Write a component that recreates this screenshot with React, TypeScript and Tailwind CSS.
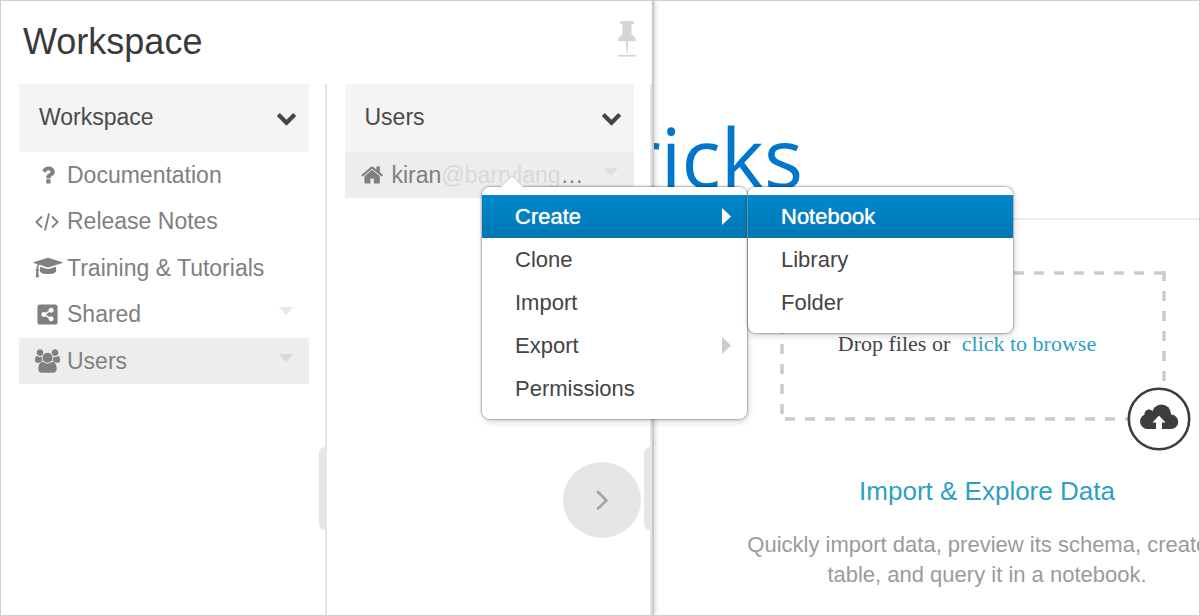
import type { ReactNode } from "react";
import { FaShareAltSquare } from "react-icons/fa";

const QUESTION =
  "M1088 1256v240q0 16-12 28t-28 12h-240q-16 0-28-12t-12-28v-240q0-16 12-28t28-12h240q16 0 28 12t12 28zm316-600q0 54-15.5 101t-35 76.5-55 59.5-57.5 43.5-61 35.5q-41 23-68.5 65t-27.5 67q0 17-12 32.5t-28 15.5h-240q-15 0-25.5-18.5t-10.5-37.5v-45q0-83 65-156.5t143-108.5q59-27 84-56t25-76q0-42-46.5-74t-107.5-32q-65 0-108 29-35 25-107 115-13 16-31 16-12 0-25-8l-164-125q-13-10-15.5-25t5.5-28q160-266 464-266 80 0 161 31t146 83 106 127.5 41 158.5z";
const CAP =
  "M1774 836l18 316q4 69-82 128t-235 93.5-323 34.5-323-34.5-235-93.5-82-128l18-316 574 181q22 7 48 7t48-7zm530-324q0 23-22 31l-1120 352q-4 1-10 1t-10-1l-652-206q-43 34-71 111.5t-34 178.5q63 36 63 109 0 69-58 107l58 433q2 14-8 25-9 11-24 11h-192q-15 0-24-11-10-11-8-25l58-433q-58-38-58-107 0-73 65-111 11-207 98-330l-333-104q-22-8-22-31t22-31l1120-352q4-1 10-1t10 1l1120 352q22 8 22 31z";
const GROUP =
  "M593 896q-162 5-265 128h-134q-82 0-138-40.5t-56-118.5q0-353 124-353 6 0 43.5 21t97.5 42.5 119 21.5q67 0 133-23-5 37-5 66 0 139 81 256zm1071 637q0 120-73 189.5t-194 69.5h-874q-121 0-194-69.5t-73-189.5q0-53 3.5-103.5t14-109 26.5-108.5 43-97.5 62-81 85.5-53.5 111.5-20q10 0 43 21.5t73 48 107 48 135 21.5 135-21.5 107-48 73-48 43-21.5q61 0 111.5 20t85.5 53.5 62 81 43 97.5 26.5 108.5 14 109 3.5 103.5zm-1024-1277q0 106-75 181t-181 75-181-75-75-181 75-181 181-75 181 75 75 181zm704 384q0 159-112.5 271.5t-271.5 112.5-271.5-112.5-112.5-271.5 112.5-271.5 271.5-112.5 271.5 112.5 112.5 271.5zm576 225q0 78-56 118.5t-138 40.5h-134q-103-123-265-128 81-117 81-256 0-29-5-66 66 23 133 23 59 0 119-21.5t97.5-42.5 43.5-21q124 0 124 353zm-128-609q0 106-75 181t-181 75-181-75-75-181 75-181 181-75 181 75 75 181z";
const HOME =
  "M1408 992v480q0 26-19 45t-45 19h-384v-384h-256v384h-384q-26 0-45-19t-19-45v-480q0-1 .5-3t.5-3l575-474 575 474q1 2 1 6zm223-69l-62 74q-8 9-21 11h-3q-13 0-21-7l-692-577-692 577q-12 8-24 7-13-2-21-11l-62-74q-8-10-7-23.5t11-21.5l719-599q32-26 76-26t76 26l244 204v-195q0-14 9-23t23-9h192q14 0 23 9t9 23v408l219 182q10 8 11 21.5t-7 23.5z";
const CHEVRON =
  "M1683 808l-742 741q-19 19-45 19t-45-19l-742-741q-19-19-19-45.5t19-45.5l166-165q19-19 45-19t45 19l531 531 531-531q19-19 45-19t45 19l166 165q19 19 19 45.500t-19 45.500z";

function Glyph({ d, box, className }: { d: string; box: string; className: string }) {
  return (
    <svg viewBox={box} className={className} fill="currentColor" aria-hidden="true">
      <path d={d} />
    </svg>
  );
}

function Caret({ className }: { className: string }) {
  return (
    <svg viewBox="0 0 14 8" className={`mb-1.5 h-2 w-3.5 ${className}`} fill="currentColor" aria-hidden="true">
      <path d="M0 0h14L7 8z" />
    </svg>
  );
}

function ColumnHeader({ title }: { title: string }) {
  return (
    <button className="flex h-[68px] w-full items-center justify-between bg-[#f4f4f4] pr-3 pb-0.5 pl-5 text-left text-[23px] text-[#4a4a4a]">
      {title}
      <Glyph d={CHEVRON} box="0 0 1792 1792" className="size-[21px] text-[#444]" />
    </button>
  );
}

function Row({
  icon,
  children,
  caret,
  active,
}: {
  icon: ReactNode;
  children: ReactNode;
  caret?: string;
  active?: boolean;
}) {
  return (
    <li className={active ? "bg-[#ededed]" : ""}>
      <a href="#" className="flex h-full items-center pr-4 text-[23px] text-[#808080]">
        {icon}
        <span className="flex-1 whitespace-nowrap">{children}</span>
        {caret && <Caret className={caret} />}
      </a>
    </li>
  );
}

function Column({ title, children }: { title: string; children: ReactNode }) {
  return (
    <section className="relative flex-1 border-r-2 border-[#e6e6e6] pr-4 pl-[18px]">
      <ColumnHeader title={title} />
      {children}
      <div className="absolute top-[363px] right-0 h-[83px] w-1.5 rounded-l-md bg-[#e5e6e8]" />
    </section>
  );
}

function MenuItem({ label, arrow, active }: { label: string; arrow?: boolean; active?: boolean }) {
  return (
    <li>
      <button
        role="menuitem"
        className={
          active
            ? "flex h-[43px] w-full items-center justify-between bg-linear-to-b from-[#0088cc] to-[#0077b3] pr-4 pl-[33px] text-white [text-shadow:0_0_1px_#fff]"
            : "flex h-[43px] w-full items-center justify-between pr-4 pl-[33px] text-[#444]"
        }
      >
        {label}
        {arrow && (
          <svg
            viewBox="0 0 9 17"
            className={active ? "h-[17px] w-[9px] text-white" : "h-[17px] w-[9px] text-[#ccc]"}
            fill="currentColor"
            aria-hidden="true"
          >
            <path d="M0 0l9 8.500L0 17z" />
          </svg>
        )}
      </button>
    </li>
  );
}

const menuClass =
  "absolute w-[267px] rounded-[9px] border border-black/15 bg-white bg-clip-padding pt-2 pb-[9px] text-[22px] shadow-[0_0_1px_1px_rgba(0,0,0,0.08),1px_3px_6px_rgba(0,0,0,0.12)]";

export default function App() {
  return (
    <div className="relative flex min-h-screen overflow-hidden border border-[#cfcfcf] bg-white font-['Liberation_Sans',Arial,sans-serif]">
      <aside className="z-10 flex w-[653px] shrink-0 flex-col border-r-2 border-[#c9c9c9] bg-white shadow-[2px_0_4px_rgba(0,0,0,0.14)]">
        <header className="flex h-[83px] items-start justify-between pt-3.5 pr-4 pl-[22px]">
          <h1 className="text-[36px] leading-[54px] text-[#3a3a3a]">Workspace</h1>
          <button aria-label="Pin panel" className="pt-1.5">
            <svg viewBox="0 0 18 36" className="h-9 w-[18px]" fill="#d5d5d5" aria-hidden="true">
              <path d="M3.500 0h11q1.500 0 1.500 1.600T14.500 3.200l-1 .3v10q4.500 2 4.500 6.800H0q0-4.800 4.500-6.800v-10l-1-.3Q2 3.200 2 1.600T3.500 0z" />
              <path d="M8 20h2.200l-.5 12h-1.200z" />
              <path d="M0 33.800h18v1.800H0z" />
            </svg>
          </button>
        </header>
        <div className="flex flex-1">
          <Column title="Workspace">
            <ul className="grid h-[232px] grid-rows-5">
              <Row icon={<Glyph d={QUESTION} box="0 0 1792 1792" className="mr-[7px] ml-[17px] size-6" />}>
                Documentation
              </Row>
              <Row
                icon={
                  <svg viewBox="0 0 24 18" className="mr-2 ml-4 h-[18px] w-6" fill="none" stroke="currentColor" strokeWidth="1.900" aria-hidden="true">
                    <path d="M7 3.500L1.400 9 7 14.500M17 3.500L22.600 9 17 14.500M14 .5l-4 17" />
                  </svg>
                }
              >
                Release Notes
              </Row>
              <Row icon={<Glyph d={CAP} box="0 0 2304 1792" className="mr-1 ml-3.5 h-[23px] w-[30px]" />}>
                Training &amp; Tutorials
              </Row>
              <Row icon={<FaShareAltSquare className="mr-[7px] ml-4 size-[23px] w-[25px]" />} caret="text-[#e8e8e8]">
                Shared
              </Row>
              <Row
                icon={<Glyph d={GROUP} box="0 0 1920 1792" className="mr-[7px] ml-4 h-6 w-[25px]" />}
                caret="text-[#dadada]"
                active
              >
                Users
              </Row>
            </ul>
          </Column>
          <Column title="Users">
            <ul className="grid h-[46px]">
              <Row
                icon={<Glyph d={HOME} box="0 0 1792 1792" className="mr-[7px] ml-4 size-6" />}
                caret="text-[#dedede]"
                active
              >
                kiran<span className="text-[#d9d9d9]">@barrylang</span>…
              </Row>
            </ul>
            <button
              aria-label="Next"
              className="absolute top-[378px] right-[9px] flex h-[76px] w-[78px] items-center justify-center rounded-[50%] bg-[#e6e6e6]"
            >
              <svg viewBox="0 0 12 20" className="h-5 w-3" fill="none" stroke="#a3a3a3" strokeWidth="2.600" strokeLinecap="round" aria-hidden="true">
                <path d="M2 2l8.500 8.500L2 18.500" />
              </svg>
            </button>
          </Column>
        </div>
      </aside>

      <main className="min-w-0 flex-1 overflow-hidden">
        <div className="flex h-[217px] w-[149px] justify-end overflow-hidden pt-[99px] font-['Open_Sans','Noto_Sans',sans-serif] text-[82px] leading-[112px] font-medium text-[#0077cc]">
          databricks
        </div>
        <hr className="border-t-2 border-[#ececec]" />
        <section className="ml-[92px] w-[482px] pt-[51px] text-center">
          <div className="relative ml-[34px] flex h-[150px] w-[386px] items-center justify-center pr-3 pb-1.5 font-['Liberation_Serif',serif] text-[22px] text-[#444]">
            <svg className="absolute inset-0 size-full" fill="none" stroke="#ccc" strokeWidth="3.500" strokeDasharray="10 10" aria-hidden="true">
              <path d="M2 143V2M384 0V112M384 2H2M5 148H348" />
            </svg>
            <p className="relative">
              Drop files or{" "}
              <a href="#" className="ml-1.5 text-[#2ca0c4]">
                click to browse
              </a>
            </p>
            <button aria-label="Upload" className="absolute -right-[25px] -bottom-[30px]">
              <svg viewBox="0 0 64 64" className="size-16" aria-hidden="true">
                <circle cx="32" cy="32" r="30.200" fill="#fff" stroke="#3d3d3d" strokeWidth="2.600" />
                <g fill="#3d3d3d">
                  <circle cx="20.500" cy="34.500" r="7.500" />
                  <circle cx="22" cy="27" r="4.500" />
                  <circle cx="34.500" cy="27" r="9.500" />
                  <circle cx="44" cy="34.800" r="7.200" />
                  <path d="M20 27h24v15H20z" />
                </g>
                <path d="M32 28.500l6.500 7H35V43h-6v-7.500h-3.500z" fill="#fff" />
              </svg>
            </button>
          </div>
          <h2 className="mt-[50px] text-[26px] leading-10 text-[#2ca0c4]">
            <a href="#">Import &amp; Explore Data</a>
          </h2>
          <p className="mt-[19px] text-[22px] leading-[30px] text-[#9b9b9b]">
            Quickly import data, preview its schema, create a table, and query it in a notebook.
          </p>
        </section>
      </main>

      <div className="absolute top-[185px] left-[480px] z-20">
        <ul role="menu" className={`${menuClass} top-0 left-0`}>
          <MenuItem label="Create" arrow active />
          <MenuItem label="Clone" />
          <MenuItem label="Import" />
          <MenuItem label="Export" arrow />
          <MenuItem label="Permissions" />
        </ul>
        <svg viewBox="0 0 26 13" className="absolute -top-[11px] left-[18px] h-[13px] w-[26px] max-w-none" aria-hidden="true">
          <path d="M1 12.500L13 .7l12 11.800" fill="#fff" stroke="#c8c8c8" />
        </svg>
        <ul role="menu" className={`${menuClass} top-0 left-[266px]`}>
          <MenuItem label="Notebook" active />
          <MenuItem label="Library" />
          <MenuItem label="Folder" />
        </ul>
      </div>
    </div>
  );
}
